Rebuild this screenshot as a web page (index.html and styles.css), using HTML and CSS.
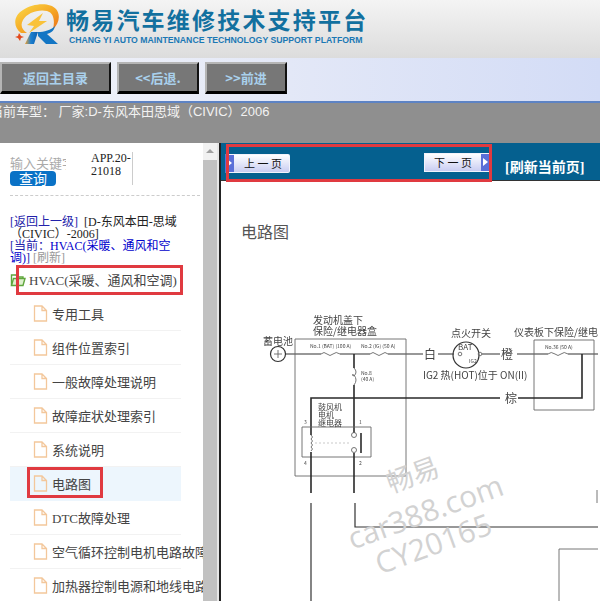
FILE: index.html
```html
<!DOCTYPE html>
<html lang="zh-CN">
<head>
    <meta charset="UTF-8">
    <meta name="viewport" content="width=device-width, initial-scale=1.0">
    <title>畅易汽车维修技术支持平台</title>
    <link rel="stylesheet" href="styles.css">
</head>
<body>
    <div class="header">
        <svg class="logo" width="54" height="46" viewBox="0 0 54 46">
            <defs>
                <linearGradient id="ring" x1="0" y1="0" x2="1" y2="1">
                    <stop offset="0" stop-color="#fbdc4a"/>
                    <stop offset="0.55" stop-color="#f5a623"/>
                    <stop offset="1" stop-color="#ea6a1c"/>
                </linearGradient>
                <linearGradient id="rblue" x1="0" y1="0" x2="1" y2="0">
                    <stop offset="0" stop-color="#f3a02a"/>
                    <stop offset="0.45" stop-color="#1b7fd0"/>
                    <stop offset="1" stop-color="#0d5fae"/>
                </linearGradient>
            </defs>
            <path d="M9 30 C1 24 1 13 11 7 C21 0 38 -1 44 6 C49 12 47 21 41 26 C43 18 42 10 35 8 C26 6 15 10 11 17 C8 22 10 27 15 30 Z" fill="url(#ring)"/>
            <path d="M31 10 L15 22 L22 23 L17 30 L35 18 L27 18 Z" fill="#f9c23a"/>
            <path d="M19 29 L26 29 L22 41 L13 41 Z" fill="url(#rblue)"/>
            <path d="M26 29 C32 29 39 27 43 23 C42 28 39 30 35 31 L46 41 L34 41 L26 33 Z" fill="#1376c4"/>
            <path d="M7 30 L9 33 L12 34 L9 35 L8 38 L6 35 L3 34 L6 33 Z" fill="#e2491c"/>
        </svg>
        <div class="brand">
            <div class="brand-title">畅易汽车维修技术支持平台</div>
            <div class="brand-sub">CHANG YI AUTO MAINTENANCE TECHNOLOGY SUPPORT PLATFORM</div>
        </div>
    </div>

    <div class="nav">
        <a class="nav-btn nav-home">返回主目录</a>
        <a class="nav-btn">&lt;&lt;后退.</a>
        <a class="nav-btn">&gt;&gt;前进</a>
    </div>

    <div class="status"><span class="status-text">当前车型： 厂家:D-东风本田思域（CIVIC）2006</span></div>

    <div class="workspace">
        <div class="sidebar">
            <div class="search">
                <div class="search-left">
                    <div class="search-label">输入关键字</div>
                    <a class="search-btn">查询</a>
                </div>
                <div class="search-code">APP.20-<br>21018</div>
            </div>

            <div class="crumbs">
                <a class="crumb-link">[返回上一级]</a> &nbsp;[D-东风本田-思域<br>
                （CIVIC）-2006]<br>
                <a class="crumb-link">[当前：<span class="crumb-current">HVAC(采暖、通风和空<br>调)</span>]</a> <span class="crumb-muted">[刷新]</span>
            </div>

            <div class="tree-root">
                <svg class="folder" width="16" height="15" viewBox="0 0 16 15">
                    <path d="M1.5 13.5 V3 H6 L7.5 5 H13 V7" fill="none" stroke="#5fa63c" stroke-width="1.4"/>
                    <path d="M1.5 13.5 L3.5 6.5 H15 L13 13.5 Z" fill="#dff0cf" stroke="#5fa63c" stroke-width="1.4"/>
                </svg>
                <span>HVAC(采暖、通风和空调)</span>
                <span class="mark mark-root"></span>
            </div>

            <ul class="tree">
                <li class="tree-item"><svg class="doc" width="15" height="17" viewBox="0 0 15 17"><path d="M1.5 1 H9 L13.5 5.5 V16 H1.5 Z M9 1 V5.5 H13.5" /></svg><span>专用工具</span></li>
                <li class="tree-item"><svg class="doc" width="15" height="17" viewBox="0 0 15 17"><path d="M1.5 1 H9 L13.5 5.5 V16 H1.5 Z M9 1 V5.5 H13.5" /></svg><span>组件位置索引</span></li>
                <li class="tree-item"><svg class="doc" width="15" height="17" viewBox="0 0 15 17"><path d="M1.5 1 H9 L13.5 5.5 V16 H1.5 Z M9 1 V5.5 H13.5" /></svg><span>一般故障处理说明</span></li>
                <li class="tree-item"><svg class="doc" width="15" height="17" viewBox="0 0 15 17"><path d="M1.5 1 H9 L13.5 5.5 V16 H1.5 Z M9 1 V5.5 H13.5" /></svg><span>故障症状处理索引</span></li>
                <li class="tree-item"><svg class="doc" width="15" height="17" viewBox="0 0 15 17"><path d="M1.5 1 H9 L13.5 5.5 V16 H1.5 Z M9 1 V5.5 H13.5" /></svg><span>系统说明</span></li>
                <li class="tree-item tree-active"><svg class="doc" width="15" height="17" viewBox="0 0 15 17"><path d="M1.5 1 H9 L13.5 5.5 V16 H1.5 Z M9 1 V5.5 H13.5" /></svg><span>电路图</span><span class="mark mark-item"></span></li>
                <li class="tree-item"><svg class="doc" width="15" height="17" viewBox="0 0 15 17"><path d="M1.5 1 H9 L13.5 5.5 V16 H1.5 Z M9 1 V5.5 H13.5" /></svg><span>DTC故障处理</span></li>
                <li class="tree-item"><svg class="doc" width="15" height="17" viewBox="0 0 15 17"><path d="M1.5 1 H9 L13.5 5.5 V16 H1.5 Z M9 1 V5.5 H13.5" /></svg><span>空气循环控制电机电路故障</span></li>
                <li class="tree-item"><svg class="doc" width="15" height="17" viewBox="0 0 15 17"><path d="M1.5 1 H9 L13.5 5.5 V16 H1.5 Z M9 1 V5.5 H13.5" /></svg><span>加热器控制电源和地线电路</span></li>
            </ul>
        </div>

        <div class="scrollbar">
            <div class="scroll-arrow"></div>
            <div class="scroll-thumb"></div>
        </div>

        <div class="main">
            <div class="toolbar">
                <a class="page-btn page-prev"><span class="page-arrow"></span><span class="page-label">上 一 页</span></a>
                <a class="page-btn page-next"><span class="page-label">下 一 页</span><span class="page-arrow"></span></a>
                <a class="refresh">[刷新当前页]</a>
                <span class="mark mark-toolbar"></span>
            </div>

            <div class="doc-page">
                <svg class="diagram" width="379" height="420" viewBox="221 181 379 420">
                    <text class="dg-title" x="243" y="238">电路图</text>

                    <g class="wires">
                        <circle cx="280" cy="354" r="7.5"/>
                        <path d="M276 354 H284 M280 350 V358" class="thin"/>
                        <path d="M287.5 354 H323 M342 354 H372 M390 354 H425" />
                        <path d="M323 354 q3 -3 6 0 q3 3 6 0 q3 -3 7 0 M372 354 q3 -3 6 0 q3 3 6 0 q3 -3 6 0" class="thin"/>
                        <path d="M440 354 H456 M484 354 H502 M519 354 H550 M570 354 H600"/>
                        <path d="M550 354 q3 -3 7 0 q3 3 6 0 q3 -3 7 0" class="thin"/>
                        <circle cx="468" cy="355" r="13"/>
                        <circle cx="462" cy="354" r="1.8" class="thin"/>
                        <circle cx="482" cy="354" r="1.8" class="thin"/>
                        <path d="M297 339 H408 V476 H297 Z" class="thin"/>
                        <path d="M536 340 H596 V410 H536 Z" class="thin"/>
                        <path d="M356 354 V368 M356 385 V433" class="heavy"/>
                        <path d="M356 368 q4 4 0 8 q-4 -2 0 -1 q4 5 0 10" class="thin"/>
                        <path d="M313 435 V398 H502 M520 398 H584 V354" class="heavy"/>
                        <path d="M304 427 H373 V457 H304 Z" class="thin"/>
                        <circle cx="356" cy="435" r="2.5" class="thin"/>
                        <circle cx="356" cy="450" r="2.5" class="thin"/>
                        <path d="M363 433 V453" class="heavy"/>
                        <path d="M317 443 H353" class="dash"/>
                        <path d="M313 435 q3 2 0 4 q3 2 0 4 q3 2 0 4 q3 2 0 4" class="thin"/>
                        <path d="M313 452 V493 M356 453 V493" class="heavy"/>
                        <path d="M313 503 V601"/>
                        <path d="M357 503 V527 H600"/>
                        <path d="M561 601 V549 H600" class="thin"/>
                        <path d="M599 490 V503" class="thin"/>
                    </g>

                    <g class="dg-text">
                        <text x="315" y="324">发动机盖下</text>
                        <text x="315" y="335">保险/继电器盒</text>
                        <text x="265" y="345">蓄电池</text>
                        <text x="453" y="337">点火开关</text>
                        <text x="516" y="336">仪表板下保险/继电器盒</text>
                        <text x="426" y="359" class="dg-big">白</text>
                        <text x="503" y="359" class="dg-big">橙</text>
                        <text x="507" y="403" class="dg-big">棕</text>
                        <text x="425" y="379">IG2 热(HOT)位于 ON(II)</text>
                        <text x="320" y="410" class="dg-mid">鼓风机</text>
                        <text x="320" y="418" class="dg-mid">电机</text>
                        <text x="320" y="426" class="dg-mid">继电器</text>
                        <text x="460" y="350" class="dg-mid">BAT</text>
                        <text x="471" y="363" class="dg-tiny">IG2</text>
                        <text x="312" y="348" class="dg-tiny">No.1 (BAT) (100 A)</text>
                        <text x="363" y="348" class="dg-tiny">No.2 (IG) (50 A)</text>
                        <text x="547" y="349" class="dg-tiny">No.36 (50 A)</text>
                        <text x="363" y="375" class="dg-tiny">No.8</text>
                        <text x="363" y="381" class="dg-tiny">(40 A)</text>
                        <text x="306" y="424" class="dg-tiny">3</text>
                        <text x="361" y="424" class="dg-tiny">1</text>
                        <text x="306" y="465" class="dg-tiny">4</text>
                        <text x="361" y="465" class="dg-tiny">2</text>
                    </g>

                    <g class="watermark">
                        <text class="wm-cn" transform="translate(418 484) rotate(-20)" text-anchor="middle">畅易</text>
                        <text transform="translate(431 522) rotate(-20)" text-anchor="middle">car388.com</text>
                        <text transform="translate(439 554) rotate(-20)" text-anchor="middle">CY20165</text>
                    </g>
                </svg>
            </div>
        </div>
    </div>
</body>
</html>
```

FILE: styles.css
```css
html, body {
    margin: 0;
    padding: 0;
    height: 601px;
    overflow: hidden;
}
body {
    display: flex;
    flex-direction: column;
    font-family: "Liberation Serif", "Noto Sans CJK SC", serif;
    font-size: 13px;
    background-color: #fff;
}

/* top banner */
.header {
    height: 58px;
    display: flex;
    align-items: flex-start;
    background: linear-gradient(to bottom, #f4f4f4, #dcdcdc);
    flex-shrink: 0;
}
.logo {
    margin: 3px 0 0 12px;
    flex-shrink: 0;
}
.brand {
    padding-top: 5px;
}
.brand-title {
    font-family: "Noto Sans CJK SC", sans-serif;
    font-size: 23px;
    font-weight: bold;
    line-height: 28px;
    letter-spacing: 2.2px;
    color: #12709f;
    white-space: nowrap;
}
.brand-sub {
    font-family: "Liberation Sans", sans-serif;
    font-size: 8.7px;
    font-weight: bold;
    line-height: 14px;
    margin-left: 3px;
    color: #1b78b4;
    white-space: nowrap;
}

/* nav buttons */
.nav {
    height: 45px;
    display: flex;
    gap: 6px;
    padding-top: 4px;
    box-sizing: border-box;
    background: linear-gradient(to right, #f2f3f8, #d3dcf6);
    border-bottom: 2px solid #5d83c4;
    flex-shrink: 0;
}
.nav-btn {
    width: 82px;
    height: 32px;
    box-sizing: border-box;
    display: flex;
    align-items: center;
    justify-content: center;
    background-color: #777;
    color: #a9d0ec;
    font-family: "Noto Sans CJK SC", sans-serif;
    font-size: 13px;
    font-weight: bold;
    border-top: 2px solid #b5b5b5;
    border-left: 2px solid #b5b5b5;
    border-right: 2px solid #111;
    border-bottom: 3px solid #000;
}
.nav-home {
    width: 111px;
}

.status {
    height: 40px;
    background-color: #8f8f8f;
    color: #f2f2f2;
    font-family: "Liberation Sans", "Noto Sans CJK SC", sans-serif;
    font-size: 13px;
    line-height: 18px;
    flex-shrink: 0;
    white-space: nowrap;
}
.status-text {
    display: block;
    margin-left: -10px;
}

/* left tree */
.workspace {
    flex: 1;
    display: flex;
    min-height: 0;
}
.sidebar {
    width: 203px;
    flex-shrink: 0;
    overflow: hidden;
    padding: 9px 0 0 10px;
    box-sizing: border-box;
}
.search {
    display: flex;
    width: 190px;
    height: 43px;
    border-bottom: 1px dashed #ccc;
}
.search-left {
    width: 56px;
    margin-right: 25px;
    padding-top: 2px;
}
.search-label {
    width: 56px;
    overflow: hidden;
    white-space: nowrap;
    font-family: "Noto Sans CJK SC", sans-serif;
    font-size: 13px;
    line-height: 17px;
    color: #aaa;
}
.search-btn {
    display: block;
    width: 46px;
    height: 15px;
    border-radius: 4px;
    background-color: #0a72c6;
    color: #fff;
    text-align: center;
    font-family: "Noto Sans CJK SC", sans-serif;
    font-size: 14px;
    line-height: 15px;
}
.search-code {
    width: 42px;
    height: 33px;
    box-sizing: border-box;
    border-right: 1px solid #ccc;
    font-size: 12px;
    line-height: 13px;
    color: #222;
}
.crumbs {
    width: 190px;
    margin-top: 20px;
    font-size: 12px;
    line-height: 12px;
    color: #222;
    white-space: nowrap;
}
.crumb-link {
    color: #2222aa;
}
.crumb-current {
    color: #0000cc;
}
.crumb-muted {
    color: #999;
}
.tree-root {
    position: relative;
    display: flex;
    align-items: center;
    height: 24px;
    margin-top: 3px;
    gap: 3px;
    font-size: 13px;
    color: #444;
    white-space: nowrap;
}
.mark {
    position: absolute;
    box-sizing: border-box;
    border: 3px solid #e03a40;
}
.mark-root {
    left: 6px;
    top: -2px;
    width: 167px;
    height: 30px;
}
.tree {
    list-style: none;
    margin: 6px 0 0;
    padding: 0;
    width: 171px;
}
.tree-item {
    position: relative;
    display: flex;
    align-items: center;
    gap: 4px;
    height: 34px;
    box-sizing: border-box;
    padding-left: 23px;
    border-bottom: 1px solid #f2f2f2;
    font-size: 13px;
    color: #444;
    white-space: nowrap;
}
.tree-active {
    background-color: #edf6fd;
    border-bottom-color: #edf6fd;
}
.mark-item {
    left: 17px;
    top: 0;
    width: 76px;
    height: 31px;
}
.doc {
    flex-shrink: 0;
    fill: #fff;
    stroke: #f3c79b;
    stroke-width: 1.3;
}
.tree-active .doc {
    fill: #edf6fd;
}

/* fake scrollbar */
.scrollbar {
    width: 14px;
    flex-shrink: 0;
    display: flex;
    flex-direction: column;
    background-color: #f1f1f1;
}
.scroll-arrow {
    height: 17px;
    flex-shrink: 0;
}
.scroll-arrow::after {
    content: "";
    display: block;
    width: 0;
    margin: 6px auto 0;
    border-left: 4px solid transparent;
    border-right: 4px solid transparent;
    border-bottom: 4px solid #a0a0a0;
}
.scroll-thumb {
    flex: 1;
    background-color: #c1c1c1;
}

/* right pane */
.main {
    flex: 1;
    min-width: 0;
    border-left: 2px solid #e6e6e6;
    padding-left: 2px;
    position: relative;
}
.main::before {
    content: "";
    position: absolute;
    top: 0;
    bottom: 0;
    left: 0;
    width: 2px;
    background-color: #222;
}
.toolbar {
    position: relative;
    height: 38px;
    background-color: #05608f;
    border-bottom: 1px solid #333;
    box-sizing: border-box;
}
.page-btn {
    position: absolute;
    display: flex;
    align-items: stretch;
    box-sizing: border-box;
    height: 19px;
    border: 1px solid #f3f3fb;
    font-family: "Noto Sans CJK SC", sans-serif;
    font-size: 11px;
    line-height: 16px;
    color: #111;
    background: linear-gradient(to bottom, #fff, #c9cdf2);
}
.page-prev {
    left: 4px;
    top: 11px;
    width: 65px;
    border-left: 0;
    border-radius: 2px;
}
.page-next {
    left: 203px;
    top: 10px;
    width: 66px;
    border-right: 0;
}
.page-label {
    flex: 1;
    text-align: center;
}
.page-prev .page-label {
    padding-left: 3px;
}
.page-arrow {
    width: 9px;
    background-color: #5a6fd8;
    position: relative;
}
.page-arrow::after {
    content: "";
    position: absolute;
    left: 2px;
    top: 4px;
    width: 0;
    border-top: 4px solid transparent;
    border-bottom: 4px solid transparent;
    border-left: 5px solid #fff;
}
.refresh {
    position: absolute;
    left: 284px;
    top: 16px;
    font-weight: bold;
    font-size: 14px;
    line-height: 18px;
    color: #fff;
    white-space: nowrap;
}
.mark-toolbar {
    left: 5px;
    top: 1px;
    width: 266px;
    height: 38px;
}
.doc-page {
    background-color: #fff;
}
.diagram {
    display: block;
    margin-left: -2px;
}
.dg-title {
    font-family: "Noto Sans CJK SC", sans-serif;
    font-size: 16px;
    fill: #555;
}
.wires {
    fill: none;
    stroke: #333;
    stroke-width: 1.2;
    filter: blur(0.3px);
}
.wires .thin {
    stroke: #666;
    stroke-width: 0.9;
}
.wires .heavy {
    stroke: #2a2a2a;
    stroke-width: 1.6;
}
.wires .dash {
    stroke: #bbb;
    stroke-width: 0.8;
    stroke-dasharray: 2 2;
}
.dg-text {
    filter: blur(0.3px);
}
.dg-text text {
    font-family: "Noto Sans CJK SC", sans-serif;
    font-size: 10px;
    fill: #444;
}
.dg-text .dg-big {
    font-size: 12px;
}
.dg-text .dg-mid {
    font-size: 8px;
}
.dg-text .dg-tiny {
    font-size: 5px;
}
.watermark text {
    font-family: "Open Sans", sans-serif;
    font-size: 30px;
    fill: #d2d2d2;
}
.watermark .wm-cn {
    font-family: "Noto Sans CJK SC", sans-serif;
    font-size: 27px;
}
```
